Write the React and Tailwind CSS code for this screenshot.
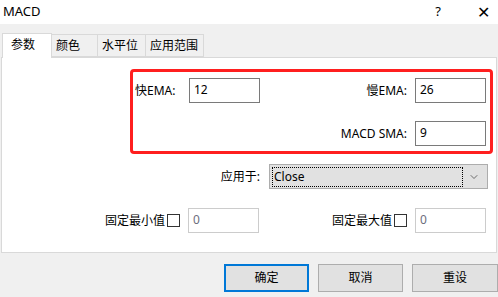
import { ChevronDown } from 'lucide-react';

const font = { fontFamily: '"Noto Sans", "Noto Sans CJK SC", sans-serif' };

const Field = ({ value, disabled }) => (
  <div
    className={`w-[71px] h-[25px] border bg-white pl-[4px] pt-[2px] leading-[18px] ${
      disabled ? 'border-[#cccccc] text-[#6d6d7d]' : 'border-[#7a7a7a] text-black'
    }`}
  >
    {value}
  </div>
);

const Check = () => <div className="w-[13px] h-[13px] border border-[#333333] bg-white" />;

const App = () => {
  return (
    <div className="w-[498px] h-[297px] bg-[#f0f0f0] text-[12px] text-black overflow-hidden flex flex-col" style={font}>
      {/* title bar */}
      <div className="h-[24px] bg-white flex items-center justify-between">
        <span className="pl-[3px] text-[13px]">MACD</span>
        <div className="flex items-center pr-[8px]">
          <span className="text-[13px] mr-[36px]">?</span>
          <span className="text-[16px] font-light">✕</span>
        </div>
      </div>

      {/* tabs */}
      <div className="flex items-end h-[33px] pl-[2px]">
        <div className="relative z-10 -mb-[1px] w-[50px] h-[25px] bg-white border border-[#d9d9d9] border-b-0 pl-[8px] pt-[2px]">
          参数
        </div>
        <div className="w-[46px] h-[23px] border border-l-0 border-[#d9d9d9] pl-[4px] pt-[2px]">颜色</div>
        <div className="w-[48px] h-[23px] border border-l-0 border-[#d9d9d9] pl-[4px] pt-[2px]">水平位</div>
        <div className="w-[58px] h-[23px] border border-l-0 border-[#d9d9d9] pl-[4px] pt-[2px]">应用范围</div>
      </div>

      {/* panel */}
      <div className="ml-[1px] w-[496px] h-[196px] bg-white border border-[#d9d9d9]">
        <div className="ml-[128px] mt-[11px] w-[363px] h-[85px] border-[3px] border-[#ff1f1f] rounded-[4px] flex flex-col pt-[6px] pr-[4px]">
          <div className="flex items-center">
            <span className="w-[56px] pl-[2px]">快EMA:</span>
            <Field value="12" />
            <div className="flex-1 flex justify-end pr-[8px]">慢EMA:</div>
            <Field value="26" />
          </div>
          <div className="flex items-center justify-end mt-[18px]">
            <span className="pr-[8px]">MACD SMA:</span>
            <Field value="9" />
          </div>
        </div>

        <div className="flex items-center justify-end pr-[8px] mt-[10px]">
          <span className="pr-[9px]">应用于:</span>
          <div className="w-[219px] h-[25px] bg-[#e1e1e1] border border-[#adadad] flex items-center px-[2px]">
            <div className="flex-1 h-[20px] border border-dotted border-black pl-[1px] leading-[18px]">Close</div>
            <ChevronDown size={12} strokeWidth={1.5} className="mx-[5px] text-[#444444]" />
          </div>
        </div>

        <div className="flex items-center mt-[19px]">
          <div className="w-[257px] flex items-center justify-end">
            <span>固定最小值</span>
            <div className="ml-[2px] mr-[8px]"><Check /></div>
            <Field value="0" disabled />
          </div>
          <div className="w-[227px] flex items-center justify-end">
            <span>固定最大值</span>
            <div className="ml-[2px] mr-[8px]"><Check /></div>
            <Field value="0" disabled />
          </div>
        </div>
      </div>

      {/* buttons */}
      <div className="flex pl-[224px] mt-[11px] gap-[9px]">
        <button className="w-[86px] h-[28px] bg-[#e1e1e1] border-2 border-[#0078d7]">确定</button>
        <button className="w-[86px] h-[28px] bg-[#e1e1e1] border border-[#adadad]">取消</button>
        <button className="w-[86px] h-[28px] shrink-0 bg-[#e1e1e1] border border-[#adadad]">重设</button>
      </div>
    </div>
  );
};

export default App;
